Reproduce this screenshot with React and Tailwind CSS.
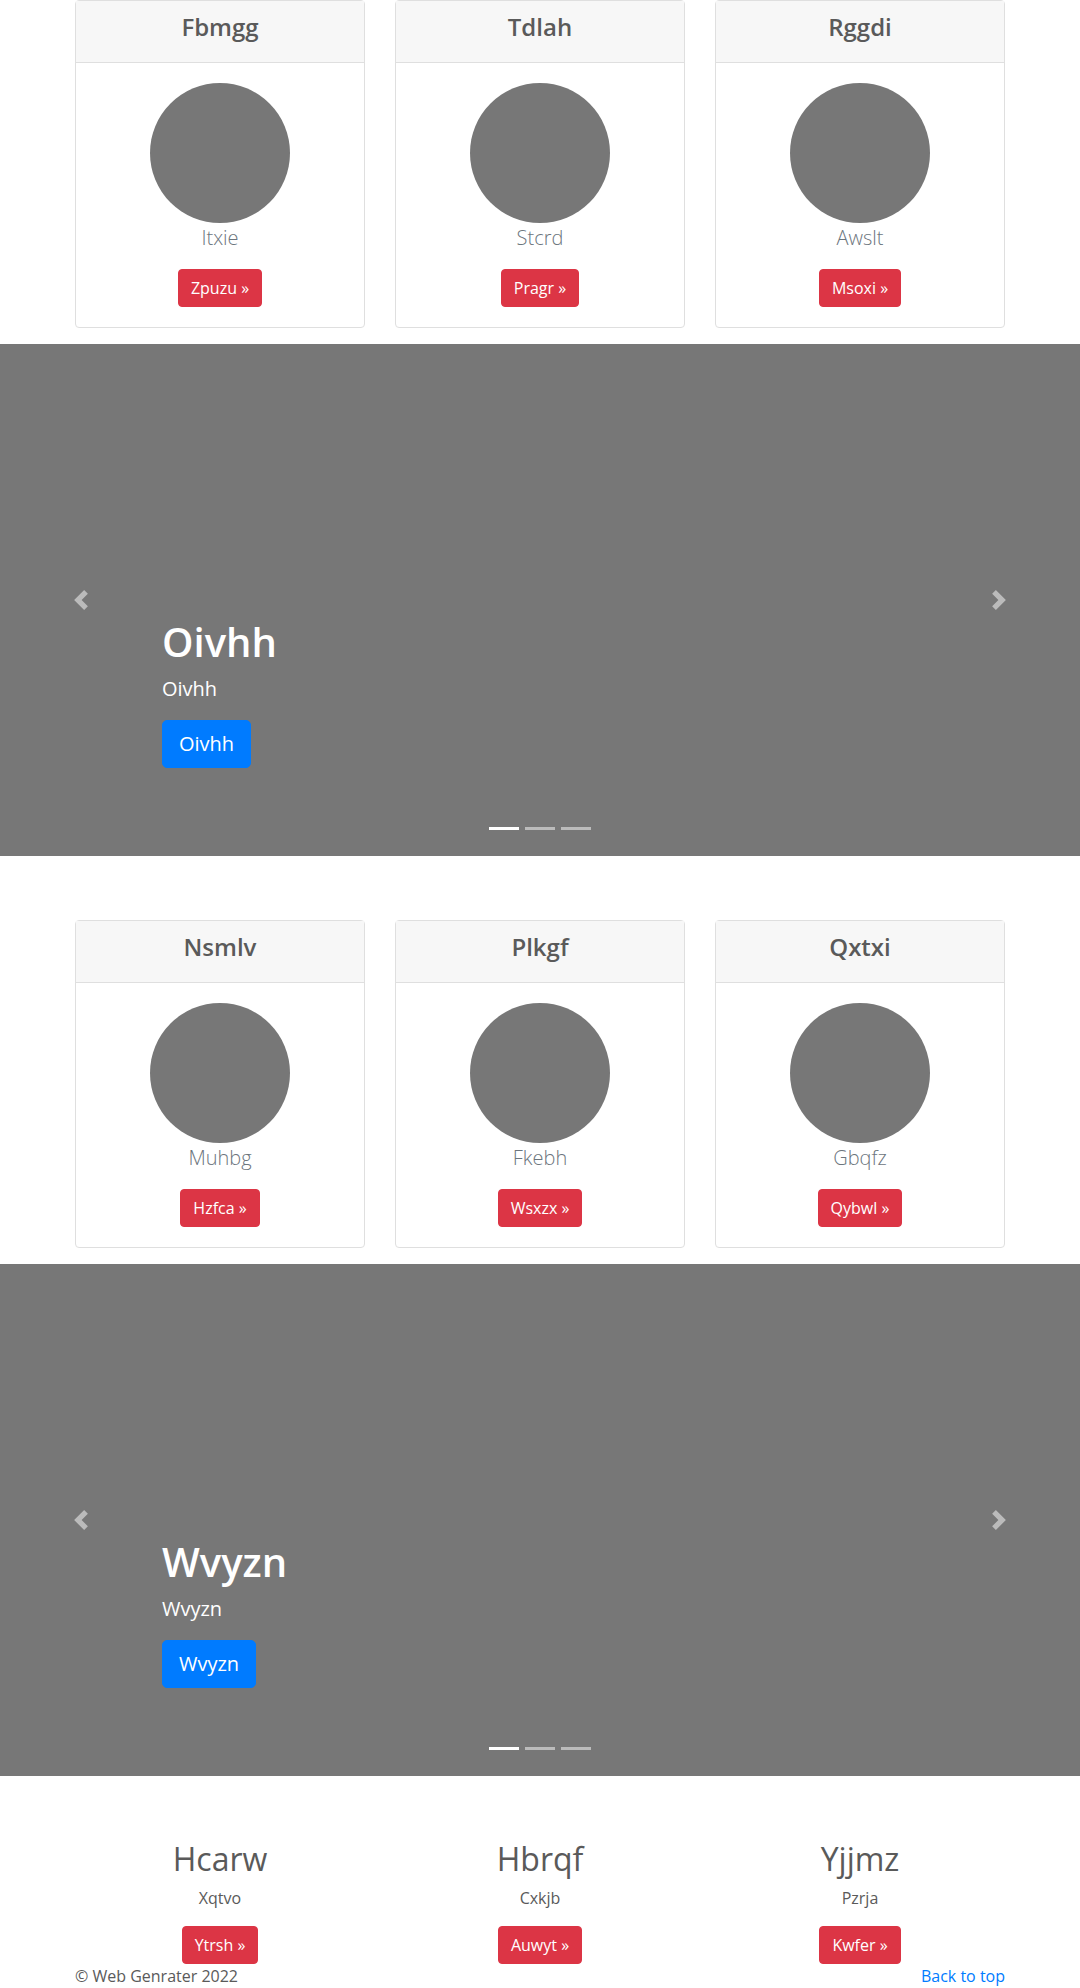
const topCards = [
  { title: "Fbmgg", name: "Itxie", action: "Zpuzu" },
  { title: "Tdlah", name: "Stcrd", action: "Pragr" },
  { title: "Rggdi", name: "Awslt", action: "Msoxi" },
];

const midCards = [
  { title: "Nsmlv", name: "Muhbg", action: "Hzfca" },
  { title: "Plkgf", name: "Fkebh", action: "Wsxzx" },
  { title: "Qxtxi", name: "Gbqfz", action: "Qybwl" },
];

const marketing = [
  { title: "Hcarw", text: "Xqtvo", action: "Ytrsh" },
  { title: "Hbrqf", text: "Cxkjb", action: "Auwyt" },
  { title: "Yjjmz", text: "Pzrja", action: "Kwfer" },
];

function RedButton({ children }) {
  return (
    <a
      href="#"
      className="inline-block rounded-[4px] border border-[#dc3545] bg-[#dc3545] px-3 py-1.5 text-base leading-6 text-white"
    >
      {children} &raquo;
    </a>
  );
}

function CardRow({ items }) {
  return (
    <div className="mx-auto mb-4 grid w-[960px] grid-cols-3 gap-[30px] px-[15px]">
      {items.map((c) => (
        <div key={c.title} className="rounded-[4px] border border-[#dfdfdf] bg-white text-center">
          <div className="border-b border-[#dfdfdf] bg-[#f7f7f7] px-5 pt-3 pb-5">
            <h4 className="text-2xl leading-[1.2] font-semibold text-[#5a5a5a]">{c.title}</h4>
          </div>
          <div className="flex flex-col items-center p-5">
            <div className="h-[140px] w-[140px] rounded-full bg-[#777]" />
            <p className="mb-4 text-xl leading-[30px] font-light text-[#6c757d]">{c.name}</p>
            <RedButton>{c.action}</RedButton>
          </div>
        </div>
      ))}
    </div>
  );
}

function Chevron({ dir }) {
  const d =
    dir === "left"
      ? "M5.25 0l-4 4 4 4 1.5-1.5L4.25 4l2.5-2.5L5.25 0z"
      : "M2.75 0l-1.5 1.5L3.75 4l-2.5 2.5L2.75 8l4-4-4-4z";
  return (
    <svg viewBox="0 0 8 8" className="h-5 w-5" fill="#fff">
      <path d={d} />
    </svg>
  );
}

function Carousel({ label }) {
  return (
    <div className="relative mb-16 h-[512px] bg-[#777]">
      <div className="absolute inset-y-0 left-0 flex w-[15%] items-center justify-center opacity-50">
        <Chevron dir="left" />
      </div>
      <div className="absolute inset-y-0 right-0 flex w-[15%] items-center justify-center opacity-50">
        <Chevron dir="right" />
      </div>
      <div className="absolute right-[15%] bottom-[88px] left-[15%] text-white">
        <h1 className="mb-2 text-[40px] leading-[1.2] font-semibold">{label}</h1>
        <p className="mb-4 text-xl leading-[30px] font-medium">{label}</p>
        <a
          href="#"
          className="inline-block rounded-[5px] border border-[#007bff] bg-[#007bff] px-4 py-2 text-xl leading-[30px] text-white"
        >
          {label}
        </a>
      </div>
      <div className="absolute bottom-[26px] left-0 right-0 flex justify-center gap-1.5">
        <span className="h-[3px] w-[30px] bg-white" />
        <span className="h-[3px] w-[30px] bg-white/50" />
        <span className="h-[3px] w-[30px] bg-white/50" />
      </div>
    </div>
  );
}

export default function App() {
  return (
    <div className="min-h-[1988px] bg-white font-['Open_Sans',sans-serif] text-[#5a5a5a]">
      <CardRow items={topCards} />
      <Carousel label="Oivhh" />
      <CardRow items={midCards} />
      <Carousel label="Wvyzn" />

      <div className="mx-auto grid w-[960px] grid-cols-3">
        {marketing.map((m) => (
          <div key={m.title} className="px-[15px] text-center">
            <h2 className="mb-2 text-[32px] leading-[1.2] font-normal">{m.title}</h2>
            <p className="mx-3 mb-4 text-base leading-6">{m.text}</p>
            <RedButton>{m.action}</RedButton>
          </div>
        ))}
      </div>

      <footer className="mx-auto flex w-[960px] justify-between px-[15px] text-base leading-6">
        <p>&copy; Web Genrater 2022</p>
        <a href="#" className="text-[#007bff]">Back to top</a>
      </footer>
    </div>
  );
}
